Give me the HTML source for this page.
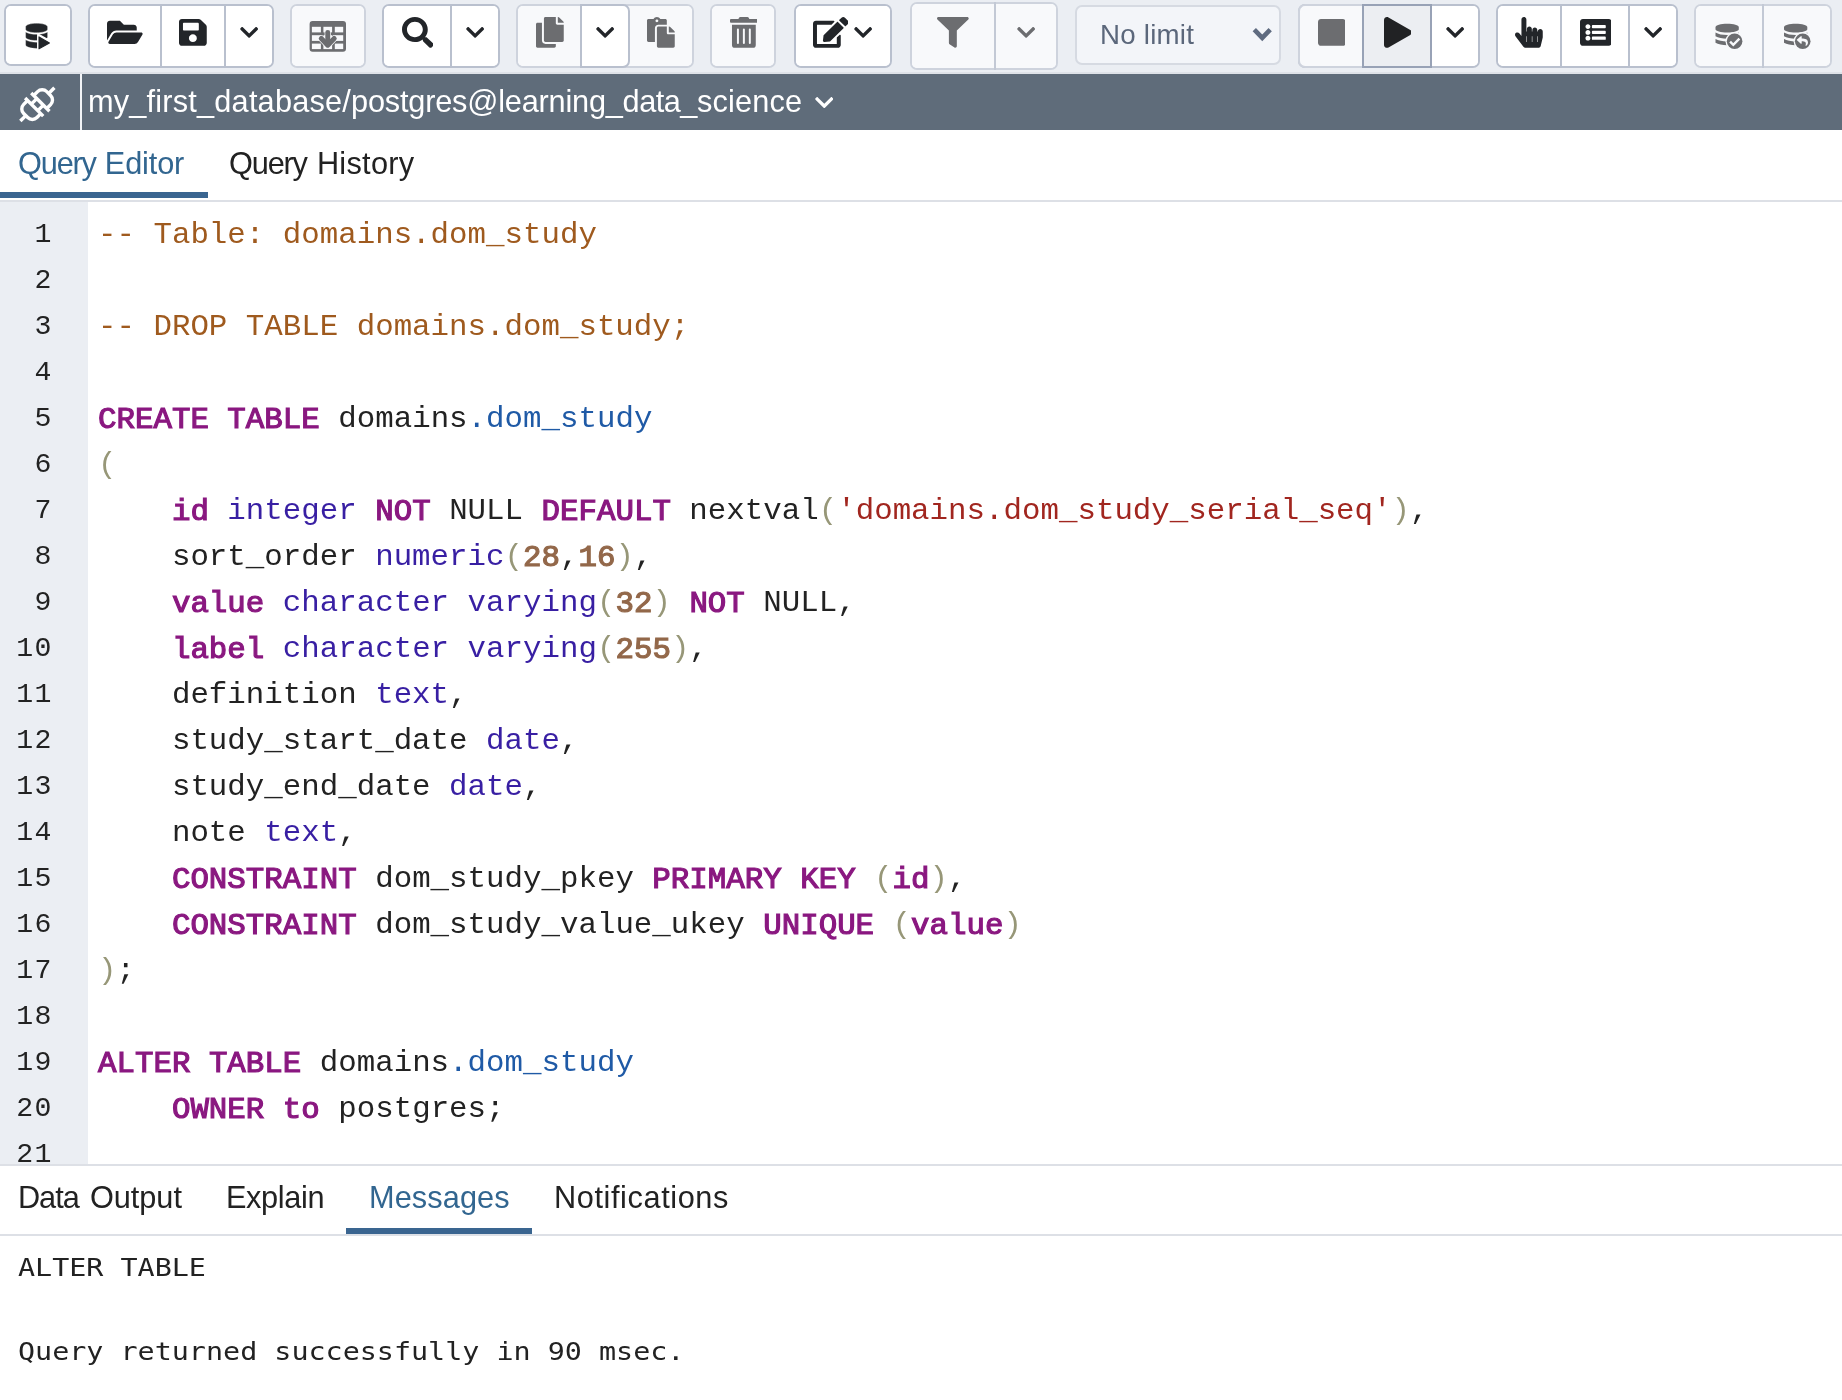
<!DOCTYPE html>
<html lang="en"><head><meta charset="utf-8"><title>Query Tool</title>
<style>
html,body{margin:0;padding:0;background:#fff;}
body{width:1842px;height:1400px;overflow:hidden;position:relative;font-family:"Liberation Sans",sans-serif;color:#222;}
#toolbar{position:absolute;left:0;top:0;width:1842px;height:72px;background:#ebeef3;border-bottom:2px solid #dfe2e8;}
.grp{position:absolute;border:2px solid #b9c0ce;border-radius:7px;background:#fff;overflow:hidden;}
.cell{position:absolute;top:0;bottom:0;}
.vl{position:absolute;width:2px;}
.hl{position:absolute;height:2px;}
.ovl{position:absolute;box-sizing:content-box;}
.ic{position:absolute;display:block;}
.sel{position:absolute;border:2px solid #d6dae2;border-radius:7px;background:#f3f5f9;}
.seltxt{position:absolute;left:23.7px;top:10.5px;font-size:27.7px;line-height:35px;color:#5b677b;letter-spacing:0.23px;white-space:nowrap;}
#connbar{position:absolute;left:0;top:74px;width:1842px;height:56px;background:#5f6c7a;}
#connsep{position:absolute;left:80px;top:0;width:2px;height:56px;background:#f2f4f7;}
#conntxt{position:absolute;left:87.5px;top:10px;font-size:30.7px;line-height:35px;color:#fff;white-space:nowrap;}
#tabs1{position:absolute;left:0;top:130px;width:1842px;height:70px;border-bottom:2px solid #dde0e6;background:#fff;}
#tabs2{position:absolute;left:0;top:1164px;width:1842px;height:68px;border-top:2px solid #dde0e6;border-bottom:2px solid #dde0e6;background:#fff;}
.tab{position:absolute;top:16px;font-size:30.7px;line-height:35px;color:#222;white-space:nowrap;}
#tabs2 .tab{top:14px;}
.tab.act{color:#326690;}
.ul{position:absolute;height:6px;background:#3a6590;}
#editor{position:absolute;left:0;top:202px;width:1842px;height:962px;overflow:hidden;background:#fff;}
#gutter{position:absolute;left:0;top:0;width:88px;height:962px;background:#ebeef3;}
#code{position:absolute;left:0;top:11.2px;letter-spacing:0.06px;font-family:"Liberation Mono","DejaVu Sans Mono",monospace;font-size:30.69px;line-height:46px;white-space:pre;color:#222;}
.ln{height:46px;position:relative;}
.no{position:absolute;left:0;top:-0.9px;width:53px;text-align:right;color:#222;font-size:28.2px;letter-spacing:1.5px;}
.tx{position:absolute;left:98px;font-size:29.3px;transform:scaleX(1.051);transform-origin:0 0;letter-spacing:0;}
.k{color:#8a1880;-webkit-text-stroke:1.15px #8a1880;display:inline-block;transform:translateY(0.7px) scaleY(1.025);transform-origin:0 30.8px;}
.c{color:#9f5a1e;}
.v{color:#1f5aa6;}
.t{color:#381fa3;}
.n{color:#93684a;-webkit-text-stroke:1.15px #93684a;display:inline-block;transform:translateY(0.7px) scaleY(1.025);transform-origin:0 30.8px;}
.s{color:#a1261f;}
.b{color:#979778;}
#msgs{position:absolute;left:18px;top:1246.8px;font-family:"DejaVu Sans Mono","Liberation Mono",monospace;font-size:25.4px;line-height:41.9px;color:#222;white-space:pre;transform:scaleX(1.1178);transform-origin:0 0;}

#conntxt,.tab,#code,#msgs,.seltxt{will-change:transform;}

</style></head>
<body>
<div id="toolbar"></div>
<div id="connbar"><div id="plugcell"></div><div id="connsep"></div>
<span id="conntxt"><span style="letter-spacing:0.207px">my_first_database/</span><span style="letter-spacing:-0.184px">postgres@</span><span style="letter-spacing:-0.207px">learning_</span><span style="letter-spacing:-0.499px">data_</span><span style="letter-spacing:0.2px">science</span></span></div>
<div class="grp" style="left:4px;top:4px;width:64px;height:58px;border-color:#b9c0ce"><div class="cell" style="left:0px;width:64px;background:#fff"></div></div>
<div class="grp" style="left:88px;top:4px;width:182px;height:60px;border-color:#b9c0ce"><div class="cell" style="left:0px;width:182px;background:#fff"></div></div>
<div class="vl" style="left:160px;top:6px;height:60px;background:#b9c0ce"></div>
<div class="vl" style="left:224px;top:6px;height:60px;background:#b9c0ce"></div>
<div class="grp" style="left:290px;top:4px;width:72px;height:60px;border-color:#ced3dd"><div class="cell" style="left:0px;width:72px;background:#f8f9fb"></div></div>
<div class="grp" style="left:382px;top:4px;width:114px;height:60px;border-color:#b9c0ce"><div class="cell" style="left:0px;width:114px;background:#fff"></div></div>
<div class="vl" style="left:450px;top:6px;height:60px;background:#b9c0ce"></div>
<div class="grp" style="left:516px;top:4px;width:174px;height:60px;border-color:#ced3dd"><div class="cell" style="left:0px;width:174px;background:#f8f9fb"></div></div>
<div class="ovl" style="left:580px;top:4px;width:46px;height:60px;border:2px solid #b9c0ce;border-radius:0 7px 7px 0;background:#fff"></div>
<div class="grp" style="left:710px;top:4px;width:62px;height:60px;border-color:#ced3dd"><div class="cell" style="left:0px;width:62px;background:#f8f9fb"></div></div>
<div class="grp" style="left:794px;top:4px;width:94px;height:60px;border-color:#b9c0ce"><div class="cell" style="left:0px;width:94px;background:#fff"></div></div>
<div class="grp" style="left:910px;top:2px;width:144px;height:64px;border-color:#ced3dd"><div class="cell" style="left:0px;width:144px;background:#f8f9fb"></div></div>
<div class="vl" style="left:994px;top:2px;height:68px;background:#c3c9d5"></div>
<div class="sel" style="left:1074.6px;top:4.7px;width:202.8px;height:56.5px"><span class="seltxt">No limit</span></div>
<div class="grp" style="left:1298px;top:4px;width:178px;height:60px;border-color:#b9c0ce"><div class="cell" style="left:0px;width:63px;background:#f8f9fb"></div><div class="cell" style="left:63px;width:115px;background:#fff"></div></div>
<div class="ovl" style="left:1298px;top:4px;width:62px;height:60px;border:2px solid #ced3dd;border-right:none;border-radius:7px 0 0 7px;background:#f8f9fb"></div>
<div class="ovl" style="left:1362px;top:4px;width:66px;height:60px;border:2px solid #98a2b6;background:#eceef2"></div>
<div class="grp" style="left:1496px;top:4px;width:178px;height:60px;border-color:#b9c0ce"><div class="cell" style="left:0px;width:178px;background:#fff"></div></div>
<div class="vl" style="left:1560px;top:6px;height:60px;background:#b9c0ce"></div>
<div class="vl" style="left:1628px;top:6px;height:60px;background:#b9c0ce"></div>
<div class="grp" style="left:1694px;top:4px;width:134px;height:60px;border-color:#ced3dd"><div class="cell" style="left:0px;width:134px;background:#f8f9fb"></div></div>
<div class="vl" style="left:1762px;top:4px;height:64px;background:#c3c9d5"></div>
<svg class="ic" style="left:107.06px;top:17.00px" width="35.69" height="30.80" viewBox="0 0 576 512" preserveAspectRatio="none"><path fill="#222529" d="M572.694 292.093L500.27 416.248A63.997 63.997 0 0 1 444.989 448H45.025c-18.523 0-30.064-20.093-20.731-36.093l72.424-124.155A64 64 0 0 1 152 256h399.964c18.523 0 30.064 20.093 20.73 36.093zM152 224h328v-48c0-26.51-21.49-48-48-48H272l-64-64H48C21.49 64 0 85.49 0 112v278.046l69.077-118.418C86.214 242.25 117.989 224 152 224z"/></svg>
<svg class="ic" style="left:179.12px;top:17.00px" width="27.76" height="30.80" viewBox="0 0 448 512" preserveAspectRatio="none"><path fill="#222529" d="M433.941 129.941l-83.882-83.882A48 48 0 0 0 316.118 32H48C21.49 32 0 53.49 0 80v352c0 26.51 21.49 48 48 48h352c26.51 0 48-21.49 48-48V163.882a48 48 0 0 0-14.059-33.941zM224 416c-35.346 0-64-28.654-64-64 0-35.346 28.654-64 64-64s64 28.654 64 64c0 35.346-28.654 64-64 64zm96-304.52V212c0 6.627-5.373 12-12 12H76c-6.627 0-12-5.373-12-12V108c0-6.627 5.373-12 12-12h228.52c3.183 0 6.235 1.264 8.485 3.515l3.48 3.48A11.996 11.996 0 0 1 320 111.48z"/></svg>
<svg class="ic" style="left:239.56px;top:21.95px" width="18.29" height="20.90" viewBox="0 0 448 512" preserveAspectRatio="none"><path fill="#222529" d="M207.029 381.476L12.686 187.132c-9.373-9.373-9.373-24.569 0-33.941l22.667-22.667c9.357-9.357 24.522-9.375 33.901-.04L224 284.505l154.745-154.021c9.379-9.335 24.544-9.317 33.901.04l22.667 22.667c9.373 9.373 9.373 24.569 0 33.941L240.971 381.476c-9.373 9.372-24.569 9.372-33.942 0z"/></svg>
<svg class="ic" style="left:401.54px;top:17.00px" width="31.72" height="30.80" viewBox="0 0 512 512" preserveAspectRatio="none"><path fill="#222529" d="M505 442.7L405.3 343c-4.5-4.5-10.6-7-17-7H372c27.6-35.3 44-79.7 44-128C416 93.1 322.9 0 208 0S0 93.1 0 208s93.1 208 208 208c48.3 0 92.7-16.4 128-44v16.3c0 6.4 2.5 12.5 7 17l99.700 99.700c9.400 9.400 24.600 9.400 33.900 0l28.300-28.300c9.400-9.400 9.400-24.600.1-34zM208 336c-70.700 0-128-57.200-128-128 0-70.700 57.200-128 128-128 70.700 0 128 57.200 128 128 0 70.700-57.200 128-128 128z"/></svg>
<svg class="ic" style="left:465.86px;top:21.95px" width="18.29" height="20.90" viewBox="0 0 448 512" preserveAspectRatio="none"><path fill="#222529" d="M207.029 381.476L12.686 187.132c-9.373-9.373-9.373-24.569 0-33.941l22.667-22.667c9.357-9.357 24.522-9.375 33.901-.04L224 284.505l154.745-154.021c9.379-9.335 24.544-9.317 33.901.04l22.667 22.667c9.373 9.373 9.373 24.569 0 33.941L240.971 381.476c-9.373 9.372-24.569 9.372-33.942 0z"/></svg>
<svg class="ic" style="left:536.12px;top:17.00px" width="27.76" height="30.80" viewBox="0 0 448 512" preserveAspectRatio="none"><path fill="#6c6d70" d="M320 448v40c0 13.255-10.745 24-24 24H24c-13.255 0-24-10.745-24-24V120c0-13.255 10.745-24 24-24h72v296c0 30.879 25.121 56 56 56h168zm0-344V0H152c-13.255 0-24 10.745-24 24v368c0 13.255 10.745 24 24 24h272c13.255 0 24-10.745 24-24V128H344c-13.200 0-24-10.800-24-24zm120.971-31.029L375.029 7.029A24 24 0 0 0 358.059 0H352v96h96v-6.059a24 24 0 0 0-7.029-16.970z"/></svg>
<svg class="ic" style="left:595.86px;top:21.95px" width="18.29" height="20.90" viewBox="0 0 448 512" preserveAspectRatio="none"><path fill="#222529" d="M207.029 381.476L12.686 187.132c-9.373-9.373-9.373-24.569 0-33.941l22.667-22.667c9.357-9.357 24.522-9.375 33.901-.04L224 284.505l154.745-154.021c9.379-9.335 24.544-9.317 33.901.04l22.667 22.667c9.373 9.373 9.373 24.569 0 33.941L240.971 381.476c-9.373 9.372-24.569 9.372-33.942 0z"/></svg>
<svg class="ic" style="left:646.92px;top:17.00px" width="27.76" height="30.80" viewBox="0 0 448 512" preserveAspectRatio="none"><path fill="#6c6d70" d="M128 184c0-30.879 25.122-56 56-56h136V56c0-13.255-10.745-24-24-24h-80.610C204.306 12.890 183.637 0 160 0s-44.306 12.890-55.390 32H24C10.745 32 0 42.745 0 56v336c0 13.255 10.745 24 24 24h104V184zm32-144c13.255 0 24 10.745 24 24s-10.745 24-24 24-24-10.745-24-24 10.745-24 24-24zm184 248h104v200c0 13.255-10.745 24-24 24H184c-13.255 0-24-10.745-24-24V184c0-13.255 10.745-24 24-24h136v104c0 13.200 10.800 24 24 24zm104-38.059V256h-96v-96h6.059a24 24 0 0 1 16.970 7.029l65.941 65.941a24.002 24.002 0 0 1 7.030 16.971z"/></svg>
<svg class="ic" style="left:729.62px;top:17.00px" width="27.76" height="30.80" viewBox="0 0 448 512" preserveAspectRatio="none"><path fill="#6c6d70" d="M32 464a48 48 0 0 0 48 48h288a48 48 0 0 0 48-48V128H32zm272-256a16 16 0 0 1 32 0v224a16 16 0 0 1-32 0zm-96 0a16 16 0 0 1 32 0v224a16 16 0 0 1-32 0zm-96 0a16 16 0 0 1 32 0v224a16 16 0 0 1-32 0zM432 32H312l-9.400-18.700A24 24 0 0 0 281.100 0H166.800a23.720 23.720 0 0 0-21.400 13.300L136 32H16A16 16 0 0 0 0 48v32a16 16 0 0 0 16 16h416a16 16 0 0 0 16-16V48a16 16 0 0 0-16-16z"/></svg>
<svg class="ic" style="left:812.56px;top:17.00px" width="35.69" height="30.80" viewBox="0 0 576 512" preserveAspectRatio="none"><path fill="#222529" d="M402.600 83.200l90.200 90.200c3.800 3.800 3.800 10 0 13.800L274.400 405.600l-92.800 10.300c-12.400 1.400-22.900-9.100-21.500-21.500l10.300-92.800L388.800 83.200c3.800-3.800 10-3.800 13.800 0zm162-22.900l-48.800-48.800c-15.200-15.200-39.900-15.200-55.200 0l-35.400 35.400c-3.800 3.800-3.800 10 0 13.800l90.200 90.200c3.800 3.800 10 3.800 13.800 0l35.400-35.400c15.200-15.300 15.200-40 0-55.200zM384 346.200V448H64V128h229.800c3.200 0 6.200-1.300 8.500-3.500l40-40c7.600-7.600 2.200-20.500-8.500-20.500H48C21.500 64 0 85.500 0 112v352c0 26.500 21.500 48 48 48h352c26.500 0 48-21.500 48-48V306.200c0-10.700-12.900-16-20.500-8.500l-40 40c-2.200 2.300-3.500 5.300-3.500 8.500z"/></svg>
<svg class="ic" style="left:854.36px;top:21.95px" width="18.29" height="20.90" viewBox="0 0 448 512" preserveAspectRatio="none"><path fill="#222529" d="M207.029 381.476L12.686 187.132c-9.373-9.373-9.373-24.569 0-33.941l22.667-22.667c9.357-9.357 24.522-9.375 33.901-.04L224 284.505l154.745-154.021c9.379-9.335 24.544-9.317 33.901.04l22.667 22.667c9.373 9.373 9.373 24.569 0 33.941L240.971 381.476c-9.373 9.372-24.569 9.372-33.942 0z"/></svg>
<svg class="ic" style="left:937.14px;top:17.00px" width="31.72" height="30.80" viewBox="0 0 512 512" preserveAspectRatio="none"><path fill="#6c6d70" d="M487.976 0H24.028C2.710 0-8.047 25.866 7.058 40.971L192 225.941V432c0 7.831 3.821 15.170 10.237 19.662l80 55.980C298.020 518.690 320 507.493 320 487.980V225.941l184.947-184.970C520.021 25.896 509.338 0 487.976 0z"/></svg>
<svg class="ic" style="left:1016.86px;top:21.95px" width="18.29" height="20.90" viewBox="0 0 448 512" preserveAspectRatio="none"><path fill="#6c6d70" d="M207.029 381.476L12.686 187.132c-9.373-9.373-9.373-24.569 0-33.941l22.667-22.667c9.357-9.357 24.522-9.375 33.901-.04L224 284.505l154.745-154.021c9.379-9.335 24.544-9.317 33.901.04l22.667 22.667c9.373 9.373 9.373 24.569 0 33.941L240.971 381.476c-9.373 9.372-24.569 9.372-33.942 0z"/></svg>
<svg class="ic" style="left:1317.62px;top:17.00px" width="27.76" height="30.80" viewBox="0 0 448 512" preserveAspectRatio="none"><path fill="#6c6d70" d="M400 32H48C21.500 32 0 53.500 0 80v352c0 26.500 21.500 48 48 48h352c26.500 0 48-21.500 48-48V80c0-26.500-21.500-48-48-48z"/></svg>
<svg class="ic" style="left:1383.62px;top:17.00px" width="27.76" height="30.80" viewBox="0 0 448 512" preserveAspectRatio="none"><path fill="#212224" d="M424.400 214.700L72.400 6.600C43.800-10.300 0 6.100 0 47.900V464c0 37.500 40.700 60.100 72.400 41.300l352-208c31.400-18.500 31.500-64.100 0-82.600z"/></svg>
<svg class="ic" style="left:1445.86px;top:21.95px" width="18.29" height="20.90" viewBox="0 0 448 512" preserveAspectRatio="none"><path fill="#222529" d="M207.029 381.476L12.686 187.132c-9.373-9.373-9.373-24.569 0-33.941l22.667-22.667c9.357-9.357 24.522-9.375 33.901-.04L224 284.505l154.745-154.021c9.379-9.335 24.544-9.317 33.901.04l22.667 22.667c9.373 9.373 9.373 24.569 0 33.941L240.971 381.476c-9.373 9.372-24.569 9.372-33.942 0z"/></svg>
<svg class="ic" style="left:1515.32px;top:17.00px" width="27.76" height="30.80" viewBox="0 0 448 512" preserveAspectRatio="none"><path fill="#222529" d="M448 240v96c0 3.084-.356 6.159-1.063 9.162l-32 136C410.686 499.230 394.562 512 376 512H168a40.004 40.004 0 0 1-32.350-16.473l-127.997-176c-12.993-17.866-9.043-42.883 8.822-55.876 17.867-12.994 42.884-9.043 55.877 8.823L104 315.992V40c0-22.091 17.908-40 40-40s40 17.909 40 40v200h8v-40c0-22.091 17.908-40 40-40s40 17.909 40 40v40h8v-24c0-22.091 17.908-40 40-40s40 17.909 40 40v24h8c0-22.091 17.908-40 40-40s40 17.909 40 40zm-256 80h-8v96h8v-96zm88 0h-8v96h8v-96zm88 0h-8v96h8v-96z"/></svg>
<svg class="ic" style="left:1579.54px;top:17.00px" width="31.72" height="30.80" viewBox="0 0 512 512" preserveAspectRatio="none"><path fill="#222529" d="M464 480H48c-26.510 0-48-21.490-48-48V80c0-26.510 21.490-48 48-48h416c26.510 0 48 21.490 48 48v352c0 26.510-21.490 48-48 48zM128 120c-22.091 0-40 17.909-40 40s17.909 40 40 40 40-17.909 40-40-17.909-40-40-40zm0 96c-22.091 0-40 17.909-40 40s17.909 40 40 40 40-17.909 40-40-17.909-40-40-40zm0 96c-22.091 0-40 17.909-40 40s17.909 40 40 40 40-17.909 40-40-17.909-40-40-40zm288-136v-32c0-6.627-5.373-12-12-12H204c-6.627 0-12 5.373-12 12v32c0 6.627 5.373 12 12 12h200c6.627 0 12-5.373 12-12zm0 96v-32c0-6.627-5.373-12-12-12H204c-6.627 0-12 5.373-12 12v32c0 6.627 5.373 12 12 12h200c6.627 0 12-5.373 12-12zm0 96v-32c0-6.627-5.373-12-12-12H204c-6.627 0-12 5.373-12 12v32c0 6.627 5.373 12 12 12h200c6.627 0 12-5.373 12-12z"/></svg>
<svg class="ic" style="left:1643.86px;top:21.95px" width="18.29" height="20.90" viewBox="0 0 448 512" preserveAspectRatio="none"><path fill="#222529" d="M207.029 381.476L12.686 187.132c-9.373-9.373-9.373-24.569 0-33.941l22.667-22.667c9.357-9.357 24.522-9.375 33.901-.04L224 284.505l154.745-154.021c9.379-9.335 24.544-9.317 33.901.04l22.667 22.667c9.373 9.373 9.373 24.569 0 33.941L240.971 381.476c-9.373 9.372-24.569 9.372-33.942 0z"/></svg>
<svg class="ic" style="left:814.83px;top:91.55px" width="18.55" height="21.20" viewBox="0 0 448 512" preserveAspectRatio="none"><path fill="#fff" d="M207.029 381.476L12.686 187.132c-9.373-9.373-9.373-24.569 0-33.941l22.667-22.667c9.357-9.357 24.522-9.375 33.901-.04L224 284.505l154.745-154.021c9.379-9.335 24.544-9.317 33.901.04l22.667 22.667c9.373 9.373 9.373 24.569 0 33.941L240.971 381.476c-9.373 9.372-24.569 9.372-33.942 0z"/></svg>
<svg class="ic" style="left:18px;top:16px" width="40" height="40" viewBox="18 16 40 40"><defs><clipPath id="qtc"><path d="M20 18H49.2V39.5L37.05 32.8V52H20z"/></clipPath></defs>
<g clip-path="url(#qtc)"><path transform="translate(25.6 23.3) scale(0.0491)" fill="#222529" stroke="#fff" stroke-width="7" d="M448 73.143v45.714C448 159.143 347.667 192 224 192S0 159.143 0 118.857V73.143C0 32.857 100.333 0 224 0s224 32.857 224 73.143zM448 176v102.857C448 319.143 347.667 352 224 352S0 319.143 0 278.857V176c48.125 33.143 136.208 48.572 224 48.572S399.874 209.143 448 176zm0 160v102.857C448 479.143 347.667 512 224 512S0 479.143 0 438.857V336c48.125 33.143 136.208 48.572 224 48.572S399.874 369.143 448 336z"/></g>
<path d="M39 36.9L49.4 42.9L39 48.8z" fill="#222529" stroke="#222529" stroke-width="1.1" stroke-linejoin="round"/></svg>
<svg class="ic" style="left:303px;top:12px" width="50" height="50" viewBox="303 12 50 50"><rect x="309.6" y="20.9" width="36.4" height="30.9" rx="3" fill="#6c6d70"/><rect x="311.9" y="26.8" width="9.00" height="5.60" fill="#f8f9fb"/><rect x="311.9" y="35.2" width="9.00" height="5.70" fill="#f8f9fb"/><rect x="311.9" y="43.6" width="9.00" height="5.50" fill="#f8f9fb"/><rect x="323.4" y="26.8" width="8.70" height="5.60" fill="#f8f9fb"/><rect x="323.4" y="35.2" width="8.70" height="5.70" fill="#f8f9fb"/><rect x="323.4" y="43.6" width="8.70" height="5.50" fill="#f8f9fb"/><rect x="334.8" y="26.8" width="8.40" height="5.60" fill="#f8f9fb"/><rect x="334.8" y="35.2" width="8.40" height="5.70" fill="#f8f9fb"/><rect x="334.8" y="43.6" width="8.40" height="5.50" fill="#f8f9fb"/>
<path d="M321.3 38.5L327.75 45.2L334.2 38.5" fill="none" stroke="#f8f9fb" stroke-width="6.4" stroke-linecap="round" stroke-linejoin="round"/>
<path d="M327.75 32.5V44" fill="none" stroke="#f8f9fb" stroke-width="6.3" stroke-linecap="round"/>
<path d="M321.3 38.5L327.75 45.2L334.2 38.5" fill="none" stroke="#6c6d70" stroke-width="5" stroke-linecap="round" stroke-linejoin="round"/>
<path d="M327.75 32.5V44" fill="none" stroke="#6c6d70" stroke-width="4.9" stroke-linecap="round"/></svg>
<svg class="ic" style="left:12px;top:78px" width="50" height="50" viewBox="12 78 50 50"><g transform="translate(37.3 104.65) rotate(-45)" fill="none" stroke="#fff" stroke-width="3.4">
<path d="M-3.9 -13.3V12.3M3.9 -12.5V13.3M-3.9 -4.6H3.9M-3.9 4.6H3.9"/>
<path d="M-3.9 -9.85H-9.4A6.5 6.5 0 0 0 -15.9 -3.35V2.35A6.5 6.5 0 0 0 -9.4 8.85H-3.9"/>
<path d="M3.9 -9.0H9.4A6.5 6.5 0 0 1 15.9 -2.5V2.9A6.5 6.5 0 0 1 9.4 9.4H3.9"/>
<path d="M-15.9 -0.4H-23.6M15.9 0.2H24"/></g></svg>
<svg class="ic" style="left:1700px;top:8px" width="60" height="56" viewBox="1700 8 60 56"><path transform="translate(1715.5 23.7) scale(0.052008928571428574 0.045767857142857145)" fill="#6c6d70" d="M448 73.143v45.714C448 159.143 347.667 192 224 192S0 159.143 0 118.857V73.143C0 32.857 100.333 0 224 0s224 32.857 224 73.143z"/><path fill="#6c6d70" d="M1715.5 32.6C1720.5 35.93333333333334 1733.8 35.93333333333334 1738.8 32.6V36.2C1733.8 39.53333333333334 1720.5 39.53333333333334 1715.5 36.2z"/><path fill="#6c6d70" d="M1715.5 39.0C1720.5 42.333333333333336 1733.8 42.333333333333336 1738.8 39.0V42.7C1733.8 46.03333333333334 1720.5 46.03333333333334 1715.5 42.7z"/><circle cx="1734.6" cy="41.2" r="9.1" fill="#f8f9fb"/><circle cx="1734.6" cy="41.2" r="7.8" fill="#6c6d70"/>
<path d="M1730.1 41.6L1733.3 44.8L1739.4 38.6" fill="none" stroke="#f8f9fb" stroke-width="2.4"/></svg>
<svg class="ic" style="left:1768px;top:8px" width="60" height="56" viewBox="1768 8 60 56"><path transform="translate(1784.0 23.7) scale(0.052008928571428574 0.045767857142857145)" fill="#6c6d70" d="M448 73.143v45.714C448 159.143 347.667 192 224 192S0 159.143 0 118.857V73.143C0 32.857 100.333 0 224 0s224 32.857 224 73.143z"/><path fill="#6c6d70" d="M1784.0 32.6C1789.0 35.93333333333334 1802.3 35.93333333333334 1807.3 32.6V36.2C1802.3 39.53333333333334 1789.0 39.53333333333334 1784.0 36.2z"/><path fill="#6c6d70" d="M1784.0 39.0C1789.0 42.333333333333336 1802.3 42.333333333333336 1807.3 39.0V42.7C1802.3 46.03333333333334 1789.0 46.03333333333334 1784.0 42.7z"/><circle cx="1802.7" cy="41.2" r="9.1" fill="#f8f9fb"/><circle cx="1802.7" cy="41.2" r="7.8" fill="#6c6d70"/>
<path transform="translate(1796.8 35.4) scale(0.021875)" fill="#f8f9fb" d="M8.309 189.836L184.313 37.851C199.719 24.546 224 35.347 224 56.015v80.053c160.629 1.839 288 34.032 288 186.258 0 61.441-39.581 122.309-83.333 154.132-13.653 9.931-33.111-2.533-28.077-18.631 45.344-145.012-21.507-183.510-176.590-185.742V360c0 20.700-24.300 31.453-39.687 18.164l-176.004-152c-11.071-9.562-11.086-26.753 0-36.328z"/></svg>
<svg class="ic" style="left:1246px;top:20px" width="32" height="30" viewBox="1246 20 32 30"><path d="M1254.3 29.6L1262.25 37.95L1270.2 29.6" fill="none" stroke="#5f6b80" stroke-width="4.6"/></svg>
<div id="tabs1">
<span class="tab act" style="left:18px;letter-spacing:0.48px" id="t1"><span style="letter-spacing:-1.15px">Query</span> <span style="letter-spacing:-0.14px">Editor</span></span>
<span class="tab" style="left:229px;letter-spacing:1.53px" id="t2"><span style="letter-spacing:-1.15px">Query</span> <span style="letter-spacing:0.29px">History</span></span>
<div class="ul" style="left:0;width:208px;top:62px"></div>
</div>
<div id="editor"><div id="gutter"></div><div id="code"><div class="ln"><span class="no">1</span><span class="tx"><span class="c">-- Table: domains.dom_study</span></span></div><div class="ln"><span class="no">2</span><span class="tx"></span></div><div class="ln"><span class="no">3</span><span class="tx"><span class="c">-- DROP TABLE domains.dom_study;</span></span></div><div class="ln"><span class="no">4</span><span class="tx"></span></div><div class="ln"><span class="no">5</span><span class="tx"><span class="k">CREATE</span> <span class="k">TABLE</span> domains<span class="v">.dom_study</span></span></div><div class="ln"><span class="no">6</span><span class="tx"><span class="b">(</span></span></div><div class="ln"><span class="no">7</span><span class="tx">    <span class="k">id</span> <span class="t">integer</span> <span class="k">NOT</span> NULL <span class="k">DEFAULT</span> nextval<span class="b">(</span><span class="s">&#x27;domains.dom_study_serial_seq&#x27;</span><span class="b">)</span>,</span></div><div class="ln"><span class="no">8</span><span class="tx">    sort_order <span class="t">numeric</span><span class="b">(</span><span class="n">28</span>,<span class="n">16</span><span class="b">)</span>,</span></div><div class="ln"><span class="no">9</span><span class="tx">    <span class="k">value</span> <span class="t">character</span> <span class="t">varying</span><span class="b">(</span><span class="n">32</span><span class="b">)</span> <span class="k">NOT</span> NULL,</span></div><div class="ln"><span class="no">10</span><span class="tx">    <span class="k">label</span> <span class="t">character</span> <span class="t">varying</span><span class="b">(</span><span class="n">255</span><span class="b">)</span>,</span></div><div class="ln"><span class="no">11</span><span class="tx">    definition <span class="t">text</span>,</span></div><div class="ln"><span class="no">12</span><span class="tx">    study_start_date <span class="t">date</span>,</span></div><div class="ln"><span class="no">13</span><span class="tx">    study_end_date <span class="t">date</span>,</span></div><div class="ln"><span class="no">14</span><span class="tx">    note <span class="t">text</span>,</span></div><div class="ln"><span class="no">15</span><span class="tx">    <span class="k">CONSTRAINT</span> dom_study_pkey <span class="k">PRIMARY</span> <span class="k">KEY</span> <span class="b">(</span><span class="k">id</span><span class="b">)</span>,</span></div><div class="ln"><span class="no">16</span><span class="tx">    <span class="k">CONSTRAINT</span> dom_study_value_ukey <span class="k">UNIQUE</span> <span class="b">(</span><span class="k">value</span><span class="b">)</span></span></div><div class="ln"><span class="no">17</span><span class="tx"><span class="b">)</span>;</span></div><div class="ln"><span class="no">18</span><span class="tx"></span></div><div class="ln"><span class="no">19</span><span class="tx"><span class="k">ALTER</span> <span class="k">TABLE</span> domains<span class="v">.dom_study</span></span></div><div class="ln"><span class="no">20</span><span class="tx">    <span class="k">OWNER</span> <span class="k">to</span> postgres;</span></div><div class="ln"><span class="no">21</span><span class="tx"></span></div></div></div>
<div id="tabs2">
<span class="tab" style="left:17.8px;letter-spacing:2.82px" id="t3"><span style="letter-spacing:-1.04px">Data</span> <span style="letter-spacing:-0.05px">Output</span></span>
<span class="tab" style="left:226.2px;letter-spacing:-0.35px" id="t4">Explain</span>
<span class="tab act" style="left:368.5px;letter-spacing:0.11px" id="t5">Messages</span>
<span class="tab" style="left:553.7px;letter-spacing:0.6px" id="t6">Notifications</span>
<div class="ul" style="left:346px;width:186px;top:62px"></div>
</div>
<div id="msgs"><div>ALTER TABLE</div><div>&nbsp;</div><div>Query returned successfully in 90 msec.</div></div>
</body></html>
